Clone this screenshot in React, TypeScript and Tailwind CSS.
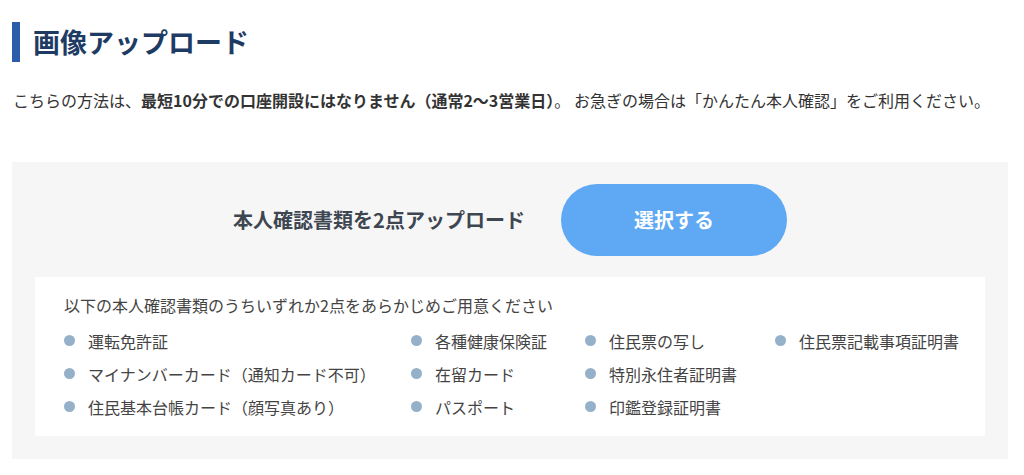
const docs = [
  "運転免許証",
  "各種健康保険証",
  "住民票の写し",
  "住民票記載事項証明書",
  "マイナンバーカード（通知カード不可）",
  "在留カード",
  "特別永住者証明書",
  "",
  "住民基本台帳カード（顔写真あり）",
  "パスポート",
  "印鑑登録証明書",
  "",
];

export default function App() {
  return (
    <div
      className="w-[1024px] h-[475px] bg-white text-[#333]"
      style={{ fontFamily: '"Noto Sans CJK JP", "Noto Sans", sans-serif' }}
    >
      {/* title */}
      <div className="pt-[22px] pl-[12px]">
        <h2 className="border-l-[8px] border-[#2a5caa] pl-[13px] text-[27px] leading-[40px] font-bold text-[#1e3b63]">
          画像アップロード
        </h2>
      </div>

      <p className="mt-[26px] pl-[13px] text-[16px] leading-[24px] text-[#333]">
        こちらの方法は、<span className="font-bold">最短10分での口座開設にはなりません（通常2〜3営業日）</span>。 お急ぎの場合は「かんたん本人確認」をご利用ください。
      </p>

      {/* upload panel */}
      <div className="mt-[50px] ml-[12px] w-[996px] bg-[#f6f6f6] px-[23px] pt-[22px] pb-[23px]">
        <div className="flex items-center justify-center gap-[36px]">
          <span className="text-[20px] font-bold text-[#3e4651]">本人確認書類を2点アップロード</span>
          <button className="w-[226px] h-[72px] rounded-full bg-[#5ea8f4] text-white text-[20px] font-bold">
            選択する
          </button>
        </div>

        <div className="mt-[21px] bg-white pl-[29px] pt-[16px] pb-[13px]">
          <p className="text-[16px] leading-[24px] text-[#444]">
            以下の本人確認書類のうちいずれか2点をあらかじめご用意ください
          </p>
          <ul className="mt-[7px] grid grid-cols-[347px_174px_190px_1fr]">
            {docs.map((d, i) => (
              <li key={i} className="flex items-center h-[33px] text-[16px] text-[#444]">
                {d && (
                  <>
                    <span className="w-[11px] h-[11px] rounded-full bg-[#95b1ca] mr-[13px] shrink-0" />
                    {d}
                  </>
                )}
              </li>
            ))}
          </ul>
        </div>
      </div>
    </div>
  );
}
